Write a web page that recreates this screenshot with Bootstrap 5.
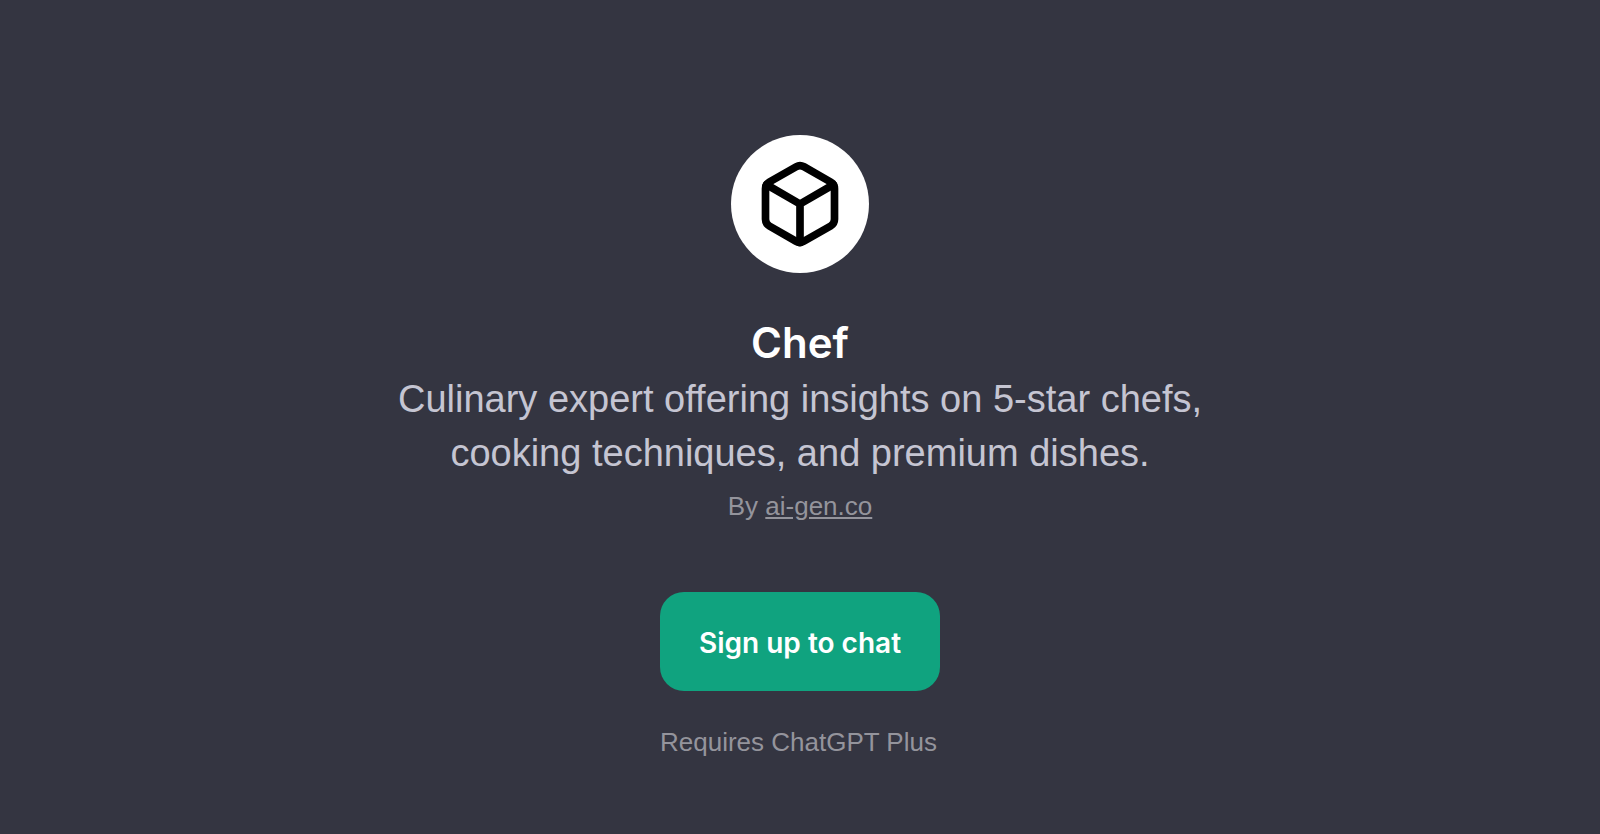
<!DOCTYPE html>
<html lang="en">
<head>
<meta charset="utf-8">
<meta name="viewport" content="width=device-width, initial-scale=1">
<title>Chef</title>
<link href="https://cdn.jsdelivr.net/npm/bootstrap@5.3.0/dist/css/bootstrap.min.css" rel="stylesheet">
<style>
body{background:#343541;font-family:"Liberation Sans",Arial,sans-serif;color:#c5c5d2}
.gpt-page{padding-top:60px}
.avatar{width:138px;height:138px;margin-bottom:41px}
.gpt-title,.btn-signup{font-family:Inter,"Liberation Sans",sans-serif;font-weight:600}
.gpt-title{font-size:42px;line-height:58px;color:#fff}
.gpt-desc{font-size:38px;line-height:54px;max-width:860px}
.gpt-small{font-size:26px;line-height:36px;color:#94949c}
.gpt-action{margin-top:68px;gap:33px}
.btn-signup{background:#10a37f;color:#fff;font-size:28px;line-height:39px;padding:32px 39px 28px;border:0;border-radius:24px}
.btn-signup:hover{background:#1a7f64;color:#fff}
</style>
</head>
<body>
<main class="gpt-page min-vh-100 d-flex flex-column align-items-center justify-content-center text-center">
<div class="avatar rounded-circle bg-white d-flex align-items-center justify-content-center">
<svg width="92" height="92" viewBox="0 0 24 24" fill="none" stroke="#000" stroke-width="2" stroke-linecap="round" stroke-linejoin="round" aria-hidden="true"><path d="M21 16V8a2 2 0 0 0-1-1.73l-7-4a2 2 0 0 0-2 0l-7 4A2 2 0 0 0 3 8v8a2 2 0 0 0 1 1.73l7 4a2 2 0 0 0 2 0l7-4A2 2 0 0 0 21 16z"/><path d="M3.27 6.96 12 12.01l8.73-5.05M12 22.08V12"/></svg>
</div>
<h1 class="gpt-title mb-0">Chef</h1>
<p class="gpt-desc mb-2">Culinary expert offering insights on 5-star chefs, cooking techniques, and premium dishes.</p>
<p class="gpt-small mb-0">By <a class="text-reset" href="#">ai-gen.co</a></p>
<div class="gpt-action d-flex flex-column align-items-start">
<button type="button" class="btn btn-signup">Sign up to chat</button>
<p class="gpt-small mb-0">Requires ChatGPT Plus</p>
</div>
</main>
<script src="https://cdn.jsdelivr.net/npm/bootstrap@5.3.0/dist/js/bootstrap.bundle.min.js"></script>
</body>
</html>
